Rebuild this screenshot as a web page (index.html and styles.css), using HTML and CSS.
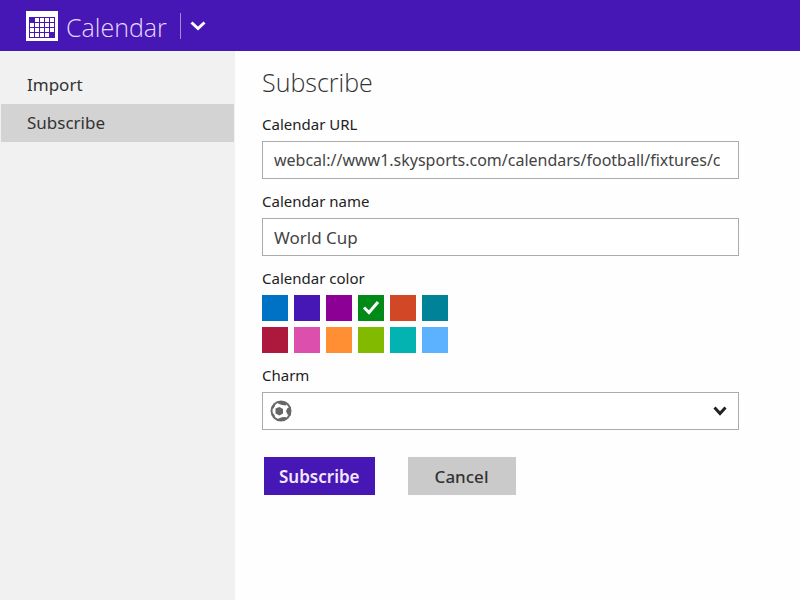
FILE: index.html
```html
<!DOCTYPE html>
<html lang="en">
<head>
<meta charset="utf-8">
<title>Calendar</title>
<link rel="stylesheet" href="styles.css">
</head>
<body>
<header class="topbar">
  <svg class="logo" viewBox="0 0 32 30" aria-hidden="true">
    <path class="logo-page" d="M0 0h32v30H0z"/>
    <path class="logo-grid" d="M3 6h26v21H3z"/>
    <path class="logo-days" d="M9 7h4v4H9zM14 7h4v4h-4zM19 7h4v4h-4zM24 7h4v4h-4zM4 12h4v4H4zM9 12h4v4H9zM14 12h4v4h-4zM19 12h4v4h-4zM24 12h4v4h-4zM4 17h4v4H4zM9 17h4v4H9zM14 17h4v4h-4zM19 17h4v4h-4zM24 17h4v4h-4zM4 22h4v4H4zM9 22h4v4H9zM14 22h4v4h-4zM19 22h4v4h-4z"/>
  </svg>
  <span class="brand">Calendar</span>
  <button class="switcher" type="button" aria-label="Switch app">
    <svg viewBox="0 0 16 12" aria-hidden="true"><path d="M1.500 2.500L8 8.500L14.500 2.500"/></svg>
  </button>
</header>
<div class="layout">
  <nav class="sidebar">
    <a class="nav-item" href="#import">Import</a>
    <a class="nav-item current" href="#subscribe" aria-current="page">Subscribe</a>
  </nav>
  <main class="content">
    <h1 class="title">Subscribe</h1>
    <form class="form">
      <div class="field">
        <label class="caption" for="url">Calendar URL</label>
        <input class="box address" id="url" type="text" value="webcal://www1.skysports.com/calendars/football/fixtures/c">
      </div>
      <div class="field">
        <label class="caption" for="name">Calendar name</label>
        <input class="box" id="name" type="text" value="World Cup">
      </div>
      <fieldset class="field">
        <legend class="caption">Calendar color</legend>
        <div class="swatches">
          <label class="swatch blue"><input type="radio" name="color" aria-label="Blue"></label>
          <label class="swatch indigo"><input type="radio" name="color" aria-label="Indigo"></label>
          <label class="swatch purple"><input type="radio" name="color" aria-label="Purple"></label>
          <label class="swatch green"><input type="radio" name="color" aria-label="Green" checked><svg viewBox="0 0 26 26" aria-hidden="true"><path d="M6 12.500L11 17.500L20 7"/></svg></label>
          <label class="swatch rust"><input type="radio" name="color" aria-label="Rust"></label>
          <label class="swatch teal"><input type="radio" name="color" aria-label="Teal"></label>
          <label class="swatch crimson"><input type="radio" name="color" aria-label="Crimson"></label>
          <label class="swatch pink"><input type="radio" name="color" aria-label="Pink"></label>
          <label class="swatch orange"><input type="radio" name="color" aria-label="Orange"></label>
          <label class="swatch lime"><input type="radio" name="color" aria-label="Lime"></label>
          <label class="swatch aqua"><input type="radio" name="color" aria-label="Aqua"></label>
          <label class="swatch sky"><input type="radio" name="color" aria-label="Sky"></label>
        </div>
      </fieldset>
      <div class="field">
        <label class="caption" for="charm">Charm</label>
        <div class="picker">
          <select class="box" id="charm"><option aria-label="Football"></option></select>
          <svg class="ball" viewBox="0 0 22 22" aria-hidden="true">
            <circle class="ball-edge" cx="11" cy="11" r="9.500"/>
            <path class="ball-patch" d="M5.500 8.500L9.500 7L13 9V13.500L9.500 15.500L5.500 13.500ZM7 2L11 1L17 3L16 5.500L12 5L8.500 3.800ZM21 7L17.500 8L16 11L17.500 14.500L21 15.500ZM7 20L11 21L17 19L15.500 17L12 17.300L8.500 18.500ZM2 7L4.500 4L5 6L3 9ZM2 15L4.500 18L5 16L3 13Z"/>
          </svg>
          <svg class="arrow" viewBox="0 0 16 12" aria-hidden="true"><path d="M2.500 2.500L8 8.500L13.500 2.500"/></svg>
        </div>
      </div>
      <div class="actions">
        <button class="button primary" type="submit">Subscribe</button>
        <button class="button" type="button">Cancel</button>
      </div>
    </form>
  </main>
</div>
</body>
</html>
```
FILE: styles.css
```css
* { box-sizing: border-box; }

body {
  margin: 0;
  min-height: 100vh;
  display: flex;
  flex-direction: column;
  background: #fefefe;
  color: #333;
  font-family: "Noto Sans", "Open Sans", sans-serif;
}

svg { display: block; fill: none; }

.topbar {
  display: flex;
  align-items: center;
  height: 51px;
  padding: 0 26px;
  background: #4617b4;
  color: #e6d8ff;
}
.logo { width: 32px; height: 30px; }
.logo-page, .logo-days { fill: #fff; }
.logo-grid { fill: #4617b4; }
.brand {
  margin: 2px 13px 0 8px;
  font-family: "Open Sans", sans-serif;
  font-size: 25px;
  font-weight: 300;
  line-height: 36px;
}
.switcher {
  height: 26px;
  padding: 0 0 0 9px;
  border: 0;
  border-left: 1px solid #a58be0;
  background: none;
}
.switcher svg { width: 16px; height: 12px; stroke: #fff; stroke-width: 3; }

.layout { flex: 1; display: flex; }

.sidebar {
  flex: 0 0 235px;
  padding: 15px 1px;
  background: #f1f1f1;
}
.nav-item {
  display: block;
  padding: 0 26px;
  color: #333;
  font-size: 17px;
  line-height: 38px;
  text-decoration: none;
}
.current { background: #d3d3d3; }

.content { flex: 1; min-width: 0; padding: 13px 61px 24px 27px; }
.title {
  margin: 0 0 15px;
  font-family: "Open Sans", sans-serif;
  font-size: 25px;
  font-weight: 300;
  line-height: 36px;
}

.form { display: flex; flex-direction: column; gap: 13px; }
.field { min-width: 0; margin: 0; padding: 0; border: 0; }
.caption {
  display: block;
  margin-bottom: 8px;
  padding: 0;
  color: #222;
  font-size: 15px;
  line-height: 18px;
}
.box {
  display: block;
  width: 100%;
  height: 38px;
  padding: 1px 11px;
  border: 1px solid #ababab;
  border-radius: 0;
  background: #fff;
  color: #444;
  font: 17px "Noto Sans", "Open Sans", sans-serif;
  appearance: none;
}
.address { font-size: 16px; }

.swatches {
  display: grid;
  grid-template-columns: repeat(6, 26px);
  grid-auto-rows: 26px;
  gap: 6px;
}
.swatch { display: grid; }
.swatch input, .swatch svg { grid-area: 1 / 1; }
.swatch input { width: 26px; height: 26px; margin: 0; appearance: none; }
.swatch svg { width: 26px; height: 26px; stroke: #fff; stroke-width: 3; }
.blue { background: #0072c6; }
.indigo { background: #4617b4; }
.purple { background: #8c0095; }
.green { background: #008a17; }
.rust { background: #d24726; }
.teal { background: #008299; }
.crimson { background: #ac193d; }
.pink { background: #dc4fad; }
.orange { background: #ff8f32; }
.lime { background: #82ba00; }
.aqua { background: #03b3b2; }
.sky { background: #5db2ff; }

.picker { display: grid; align-items: center; }
.picker > * { grid-area: 1 / 1; }
.ball { width: 22px; height: 22px; margin-left: 8px; pointer-events: none; }
.ball-edge { fill: #fff; stroke: #6a6a6a; stroke-width: 2; }
.ball-patch { fill: #666; }
.arrow {
  justify-self: end;
  width: 16px;
  height: 12px;
  margin-right: 11px;
  stroke: #222;
  stroke-width: 3;
  pointer-events: none;
}

.actions { display: flex; gap: 33px; margin: 14px 2px 0; }
.button {
  min-width: 108px;
  height: 38px;
  padding: 0 15px;
  border: 0;
  background: #cacaca;
  color: #333;
  font: 500 17px "Noto Sans", "Open Sans", sans-serif;
}
.primary { background: #4617b4; color: #f3e6ff; font-weight: 600; }
```
